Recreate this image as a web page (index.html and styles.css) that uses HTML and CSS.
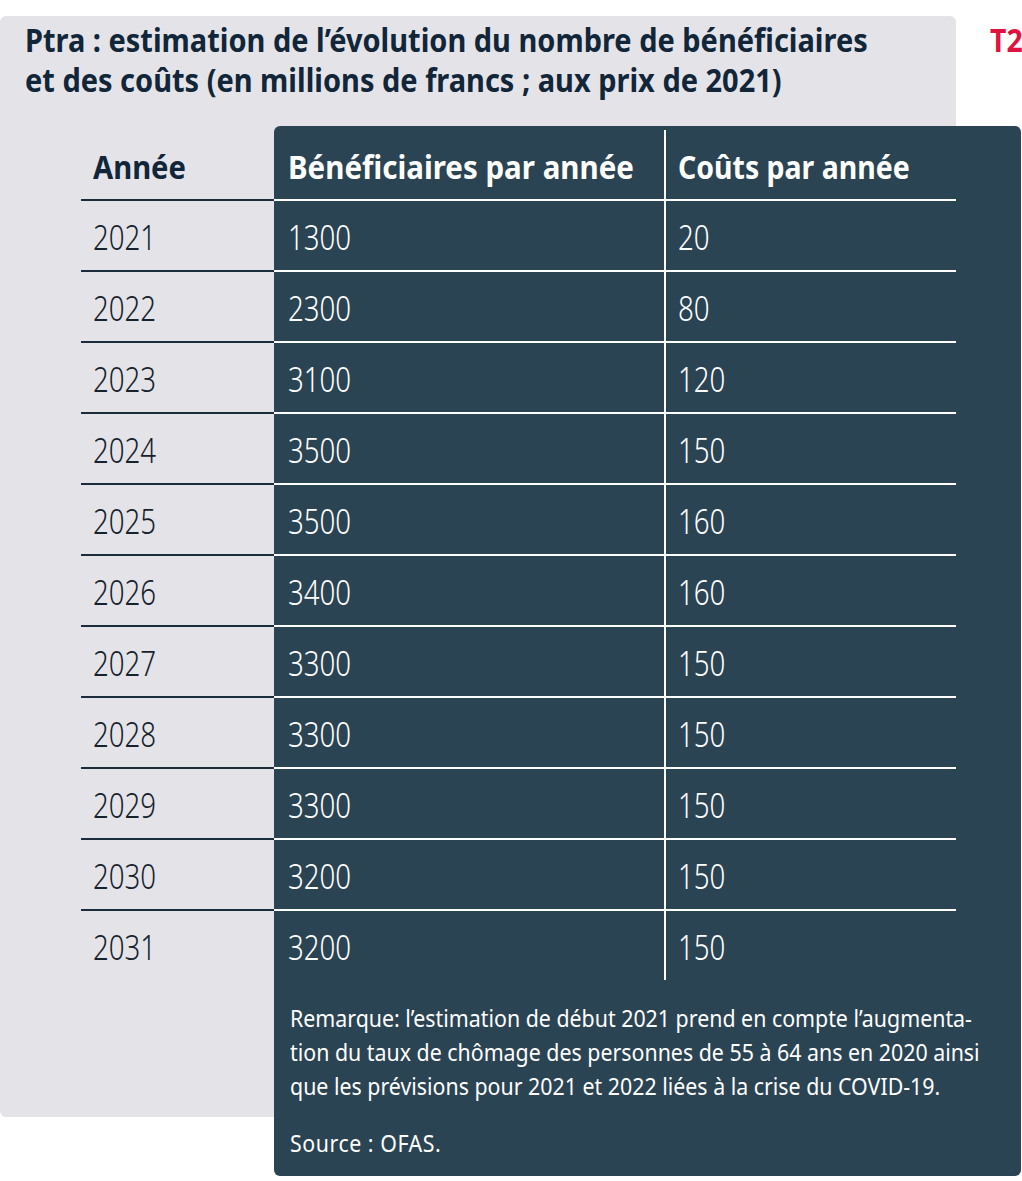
FILE: index.html
```html
<!DOCTYPE html>
<html lang="fr">
<head>
<meta charset="utf-8">
<title>Ptra</title>
<link rel="stylesheet" href="styles.css">
</head>
<body>
<div class="frame">
  <div class="grey-panel"></div>
  <div class="dark-panel"></div>
  <h1 class="title"><span class="sx">Ptra : estimation de l’évolution du nombre de bénéficiaires<br>et des coûts (en millions de francs ; aux prix de 2021)</span></h1>
  <div class="tag"><span class="sx">T2</span></div>
  <div class="content">
    <div class="table">
      <div class="row head">
        <div class="c c1"><span>Année</span></div>
        <div class="c c2"><span>Bénéficiaires par année</span></div>
        <div class="c c3"><span>Coûts par année</span></div>
      </div>
      <div class="row"><div class="c c1"><span>2021</span></div><div class="c c2"><span>1300</span></div><div class="c c3"><span>20</span></div></div>
      <div class="row"><div class="c c1"><span>2022</span></div><div class="c c2"><span>2300</span></div><div class="c c3"><span>80</span></div></div>
      <div class="row"><div class="c c1"><span>2023</span></div><div class="c c2"><span>3100</span></div><div class="c c3"><span>120</span></div></div>
      <div class="row"><div class="c c1"><span>2024</span></div><div class="c c2"><span>3500</span></div><div class="c c3"><span>150</span></div></div>
      <div class="row"><div class="c c1"><span>2025</span></div><div class="c c2"><span>3500</span></div><div class="c c3"><span>160</span></div></div>
      <div class="row"><div class="c c1"><span>2026</span></div><div class="c c2"><span>3400</span></div><div class="c c3"><span>160</span></div></div>
      <div class="row"><div class="c c1"><span>2027</span></div><div class="c c2"><span>3300</span></div><div class="c c3"><span>150</span></div></div>
      <div class="row"><div class="c c1"><span>2028</span></div><div class="c c2"><span>3300</span></div><div class="c c3"><span>150</span></div></div>
      <div class="row"><div class="c c1"><span>2029</span></div><div class="c c2"><span>3300</span></div><div class="c c3"><span>150</span></div></div>
      <div class="row"><div class="c c1"><span>2030</span></div><div class="c c2"><span>3200</span></div><div class="c c3"><span>150</span></div></div>
      <div class="row last"><div class="c c1"><span>2031</span></div><div class="c c2"><span>3200</span></div><div class="c c3"><span>150</span></div></div>
    </div>
    <div class="notes">
      <div class="sx notes-inner">
        <p class="note">Remarque: l’estimation de début 2021 prend en compte l’augmenta-<br>tion du taux de chômage des personnes de 55 à 64 ans en 2020 ainsi<br>que les prévisions pour 2021 et 2022 liées à la crise du COVID-19.</p>
        <p class="source">Source : OFAS.</p>
      </div>
    </div>
  </div>
</div>
</body>
</html>
```
FILE: styles.css
```css
html, body {
  margin: 0;
  padding: 0;
  background: #ffffff;
}
body {
  font-family: "Noto Sans", "Liberation Sans", sans-serif;
}
.frame {
  display: grid;
  grid-template-columns: 274px 682px 65px;
  grid-template-rows: 16px 110px 991px 59px;
  width: 1021px;
}
.grey-panel {
  grid-column: 1 / 3;
  grid-row: 2 / 4;
  background: #e4e4e8;
  border-radius: 6px;
}
.dark-panel {
  grid-column: 2 / 4;
  grid-row: 3 / 5;
  background: #2b4453;
  border-radius: 6px;
}
.sx {
  display: inline-block;
  transform-origin: left top;
}
.title {
  grid-column: 1 / 3;
  grid-row: 2;
  margin: 0;
  padding: 4px 0 0 25px;
  font-size: 33px;
  line-height: 40px;
  font-weight: 700;
  color: #12263a;
  white-space: nowrap;
  overflow: visible;
  min-width: 0;
}
.title .sx {
  transform: scaleX(0.878);
}
.tag {
  grid-column: 3;
  grid-row: 2;
  padding: 4px 0 0 34px;
  font-size: 33px;
  line-height: 40px;
  font-weight: 700;
  color: #e0123f;
  white-space: nowrap;
}
.tag .sx {
  transform: scaleX(0.86);
}
.content {
  grid-column: 1 / 4;
  grid-row: 3 / 5;
  padding: 4px 0 0 81px;
}
.table {
  width: 875px;
}
.row {
  display: grid;
  grid-template-columns: 193px 390px 292px;
  height: 71px;
  box-sizing: border-box;
}
.row.last {
  height: 69px;
}
.c {
  display: flex;
  align-items: center;
  font-size: 35px;
  font-weight: 300;
  box-sizing: border-box;
  padding-top: 1px;
  white-space: nowrap;
}
.c span {
  display: inline-block;
  transform: scaleX(0.79);
  transform-origin: left center;
}
.row:not(.last) .c {
  border-bottom: 2px solid #ffffff;
}
.row:not(.last) .c1 {
  border-bottom-color: #1b2d3c;
}
.c1 {
  padding-left: 12px;
  color: #16222c;
}
.c2 {
  padding-left: 14px;
  color: #ffffff;
}
.c3 {
  padding-left: 12px;
  color: #ffffff;
  border-left: 2px solid #ffffff;
}
.head .c {
  font-weight: 700;
  font-size: 33px;
  padding-top: 4px;
}
.head .c1 {
  color: #12263a;
}
.head .c1 span {
  transform: scaleX(0.884);
}
.head .c2 span {
  transform: scaleX(0.894);
}
.head .c3 span {
  transform: scaleX(0.862);
}
.notes {
  padding: 21px 0 0 209px;
  color: #ffffff;
  font-size: 24px;
  line-height: 34px;
  white-space: nowrap;
}
.notes-inner {
  transform: scaleX(0.89);
}
.note {
  margin: 0;
}
.source {
  margin: 23px 0 0;
  letter-spacing: 0.6px;
}
```
